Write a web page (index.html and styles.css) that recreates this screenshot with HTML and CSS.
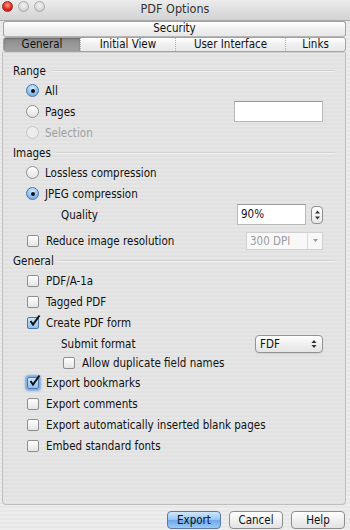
FILE: index.html
```html
<!DOCTYPE html>
<html>
<head>
<meta name="viewport" content="width=device-width, initial-scale=1.0">
<title>PDF Options</title>
<link rel="stylesheet" href="styles.css">
</head>
<body>
<div class="window">

  <!--title bar-->
  <div class="titlebar">
    <div class="lights">
      <span class="light red"></span>
      <span class="light"></span>
      <span class="light"></span>
    </div>
    <div class="title">PDF Options</div>
  </div>

  <!--tabs-->
  <div class="tabs">
    <div class="tabrow single">
      <div class="tab">Security</div>
    </div>
    <div class="tabrow">
      <div class="tab selected t-general">General</div>
      <div class="tab t-view">Initial View</div>
      <div class="tab t-ui">User Interface</div>
      <div class="tab t-links">Links</div>
    </div>
  </div>

  <!--main panel-->
  <div class="panel">

    <div class="header">Range</div>
    <div class="row">
      <span class="radio on"></span><span class="label">All</span>
    </div>
    <div class="row">
      <span class="radio"></span><span class="label">Pages</span>
      <span class="field pages"></span>
    </div>
    <div class="row disabled">
      <span class="radio off"></span><span class="label">Selection</span>
    </div>

    <div class="header">Images</div>
    <div class="row">
      <span class="radio"></span><span class="label">Lossless compression</span>
    </div>
    <div class="row">
      <span class="radio on"></span><span class="label">JPEG compression</span>
    </div>
    <div class="row">
      <span class="label sub">Quality</span>
      <span class="field quality">90%</span>
      <span class="stepper">
        <svg width="7" height="12" viewBox="0 0 7 12"><path d="M1 4.5 L3.5 1.5 L6 4.5Z M1 7.5 L3.5 10.5 L6 7.5Z" fill="#333"/></svg>
      </span>
    </div>
    <div class="row gap">
      <span class="check"></span><span class="label">Reduce image resolution</span>
      <span class="combo">
        <span class="combo-text">300 DPI</span>
        <span class="combo-btn">
          <svg width="7" height="5" viewBox="0 0 7 5"><path d="M1 1 L6 1 L3.5 4Z" fill="#999"/></svg>
        </span>
      </span>
    </div>

    <div class="header">General</div>
    <div class="row">
      <span class="check"></span><span class="label">PDF/A-1a</span>
    </div>
    <div class="row">
      <span class="check"></span><span class="label">Tagged PDF</span>
    </div>
    <div class="row">
      <span class="check on">
        <svg width="13" height="13" viewBox="0 0 13 13"><path d="M2.5 7 L5 10.5 L11.5 1.5" fill="none" stroke="#111" stroke-width="2"/></svg>
      </span><span class="label">Create PDF form</span>
    </div>
    <div class="row">
      <span class="label sub">Submit format</span>
      <span class="select">
        <span>FDF</span>
        <svg width="6" height="10" viewBox="0 0 6 10"><path d="M0.5 4 L3 1 L5.5 4Z M0.5 6 L3 9 L5.5 6Z" fill="#333"/></svg>
      </span>
    </div>
    <div class="row short">
      <span class="check inner"></span><span class="label">Allow duplicate field names</span>
    </div>
    <div class="row">
      <span class="check on focus">
        <svg width="13" height="13" viewBox="0 0 13 13"><path d="M2.5 7 L5 10.5 L11.5 1.5" fill="none" stroke="#111" stroke-width="2"/></svg>
      </span><span class="label">Export bookmarks</span>
    </div>
    <div class="row">
      <span class="check"></span><span class="label">Export comments</span>
    </div>
    <div class="row">
      <span class="check"></span><span class="label">Export automatically inserted blank pages</span>
    </div>
    <div class="row">
      <span class="check"></span><span class="label">Embed standard fonts</span>
    </div>

  </div>

  <!--buttons-->
  <div class="buttons">
    <div class="button default">Export</div>
    <div class="button">Cancel</div>
    <div class="button">Help</div>
  </div>

</div>
</body>
</html>
```

FILE: styles.css
```css
* {box-sizing: border-box;}

body{
  margin:0px;
  font-family:"DejaVu Sans Condensed", "DejaVu Sans", sans-serif;
  font-size:11.5px;
  color:#111;
}

.window{
  width:350px;
  height:530px;
  display:flex;
  flex-direction:column;
  background:repeating-linear-gradient(#ededed 0px, #ededed 2px, #e7e7e7 2px, #e7e7e7 4px);
}

/*title bar*/

.titlebar{
  height:21px;
  position:relative;
  display:flex;
  align-items:center;
  justify-content:center;
  background:linear-gradient(#ececec, #d2d2d2);
  border-bottom:1px solid #a8a8a8;
}

.lights{
  position:absolute;
  left:2px;
  top:1px;
  display:flex;
  gap:5px;
}

.light{
  width:11px;
  height:11px;
  border-radius:50%;
  background:radial-gradient(circle at 50% 35%, #f4f4f4, #c4c4c4);
  border:1px solid #a9a9a9;
}

.light.red{
  background:radial-gradient(circle at 50% 35%, #ff9a8a, #e0231b 60%, #a80f0a);
  border-color:#9b2a22;
}

.title{
  font-size:12.5px;
  color:#333;
  margin-top:-4px;
}

/*tabs*/

.tabs{
  padding:0px 4px 0px 3px;
}

.tabrow{
  display:flex;
  height:15px;
  border:1px solid #a3a3a3;
  border-radius:3px;
  background:linear-gradient(#ffffff, #f0f0f0 50%, #e8e8e8);
  overflow:hidden;
}

.tabrow.single{
  height:16px;
  border-bottom-color:#b5b5b5;
}

.tab{
  flex:1;
  text-align:center;
  line-height:13px;
  font-size:11.5px;
  color:#111;
}

.tabrow .tab + .tab{
  border-left:1px dotted #b0b0b0;
}

.t-general{ flex:0 0 76px; }
.t-view{ flex:0 0 95px; }
.t-ui{ flex:0 0 110px; }
.t-links{ flex:1; }

.tab.selected{
  background:linear-gradient(#8c8c8c, #a2a2a2);
  box-shadow:inset 0px 1px 2px #6c6c6c;
}

/*panel*/

.panel{
  flex:1;
  margin:0px 4px 0px 2px;
  border:1px solid #bdbdbd;
  border-top-color:#d0d0d0;
  border-radius:0px 0px 4px 4px;
  background:repeating-linear-gradient(#e6e6e6 0px, #e6e6e6 2px, #e1e1e1 2px, #e1e1e1 4px);
  padding:8px 22px 0px 10px;
}

.header{
  height:19px;
  display:flex;
  align-items:center;
  gap:5px;
  margin-right:-12px;
}

.header::after{
  content:"";
  flex:1;
  height:1px;
  background:#d2d2d2;
  border-bottom:1px solid #f2f2f2;
  box-sizing:content-box;
}

.row{
  height:21px;
  display:flex;
  align-items:center;
  padding-left:13px;
}

.row.gap{
  margin-top:5px;
}

.row.short{
  height:18px;
}

.label{
  flex:1;
}

.label.sub{
  padding-left:35px;
}

.disabled .label{
  color:#a0a0a0;
}

/*radio buttons*/

.radio{
  width:13px;
  height:13px;
  border-radius:50%;
  border:1px solid #8e8e8e;
  background:linear-gradient(#ffffff, #e2e2e2);
  margin-right:6px;
  position:relative;
}

.radio.on{
  border-color:#4d77a8;
  background:radial-gradient(circle at 50% 30%, #d4ecff, #8fc2f0 55%, #5d9be0);
}

.radio.on::after{
  content:"";
  position:absolute;
  left:3.5px;
  top:3.5px;
  width:4px;
  height:4px;
  border-radius:50%;
  background:#111;
}

.radio.off{
  border-color:#c6c6c6;
  background:#ececec;
}

/*checkboxes*/

.check{
  width:12px;
  height:12px;
  border:1px solid #8e8e8e;
  border-radius:2px;
  background:linear-gradient(#ffffff, #e4e4e4);
  margin:0px 7px 0px 1px;
  position:relative;
}

.check.inner{
  margin-left:37px;
}

.check.on{
  border-color:#4d77a8;
  background:linear-gradient(#cfe6fb, #90bfec);
}

.check.focus{
  box-shadow:0px 0px 2px 2px #7fa9e0;
}

.check svg{
  position:absolute;
  left:0px;
  top:-4px;
}

/*fields*/

.field{
  background:#fff;
  border:1px solid #b8b8b8;
  border-top-color:#9a9a9a;
  height:21px;
  line-height:19px;
  padding-left:3px;
}

.field.pages{
  width:89px;
}

.field.quality{
  width:69px;
}

.stepper{
  width:12px;
  height:18px;
  margin-left:5px;
  border:1px solid #8e8e8e;
  border-radius:4px;
  background:linear-gradient(#ffffff, #e8e8e8);
  display:flex;
  align-items:center;
  justify-content:center;
}

.combo{
  width:77px;
  height:18px;
  display:flex;
  background:#f8f8f8;
  border:1px solid #d0d0d0;
}

.combo-text{
  flex:1;
  padding-left:3px;
  line-height:16px;
  color:#9c9c9c;
}

.combo-btn{
  width:15px;
  border-left:1px solid #d8d8d8;
  display:flex;
  align-items:center;
  justify-content:center;
}

.select{
  width:68px;
  height:18px;
  border:1px solid #939393;
  border-radius:4px;
  background:linear-gradient(#ffffff, #f0f0f0 50%, #e4e4e4);
  display:flex;
  align-items:center;
  justify-content:space-between;
  padding:0px 5px 0px 4px;
  box-shadow:0px 1px 1px #d0d0d0;
}

/*buttons*/

.buttons{
  height:25px;
  display:flex;
  justify-content:flex-end;
  align-items:center;
  gap:8px;
  padding:4px 5px 0px 0px;
}

.button{
  width:54px;
  height:18px;
  border:1px solid #8e8e8e;
  border-radius:4px;
  background:linear-gradient(#ffffff, #f0f0f0 50%, #e2e2e2);
  text-align:center;
  line-height:16px;
}

.button.default{
  border-color:#5a7aa6;
  background:linear-gradient(#d1e6fb, #95c4f1 50%, #6aa9ec 51%, #9ccaf4);
}
```
